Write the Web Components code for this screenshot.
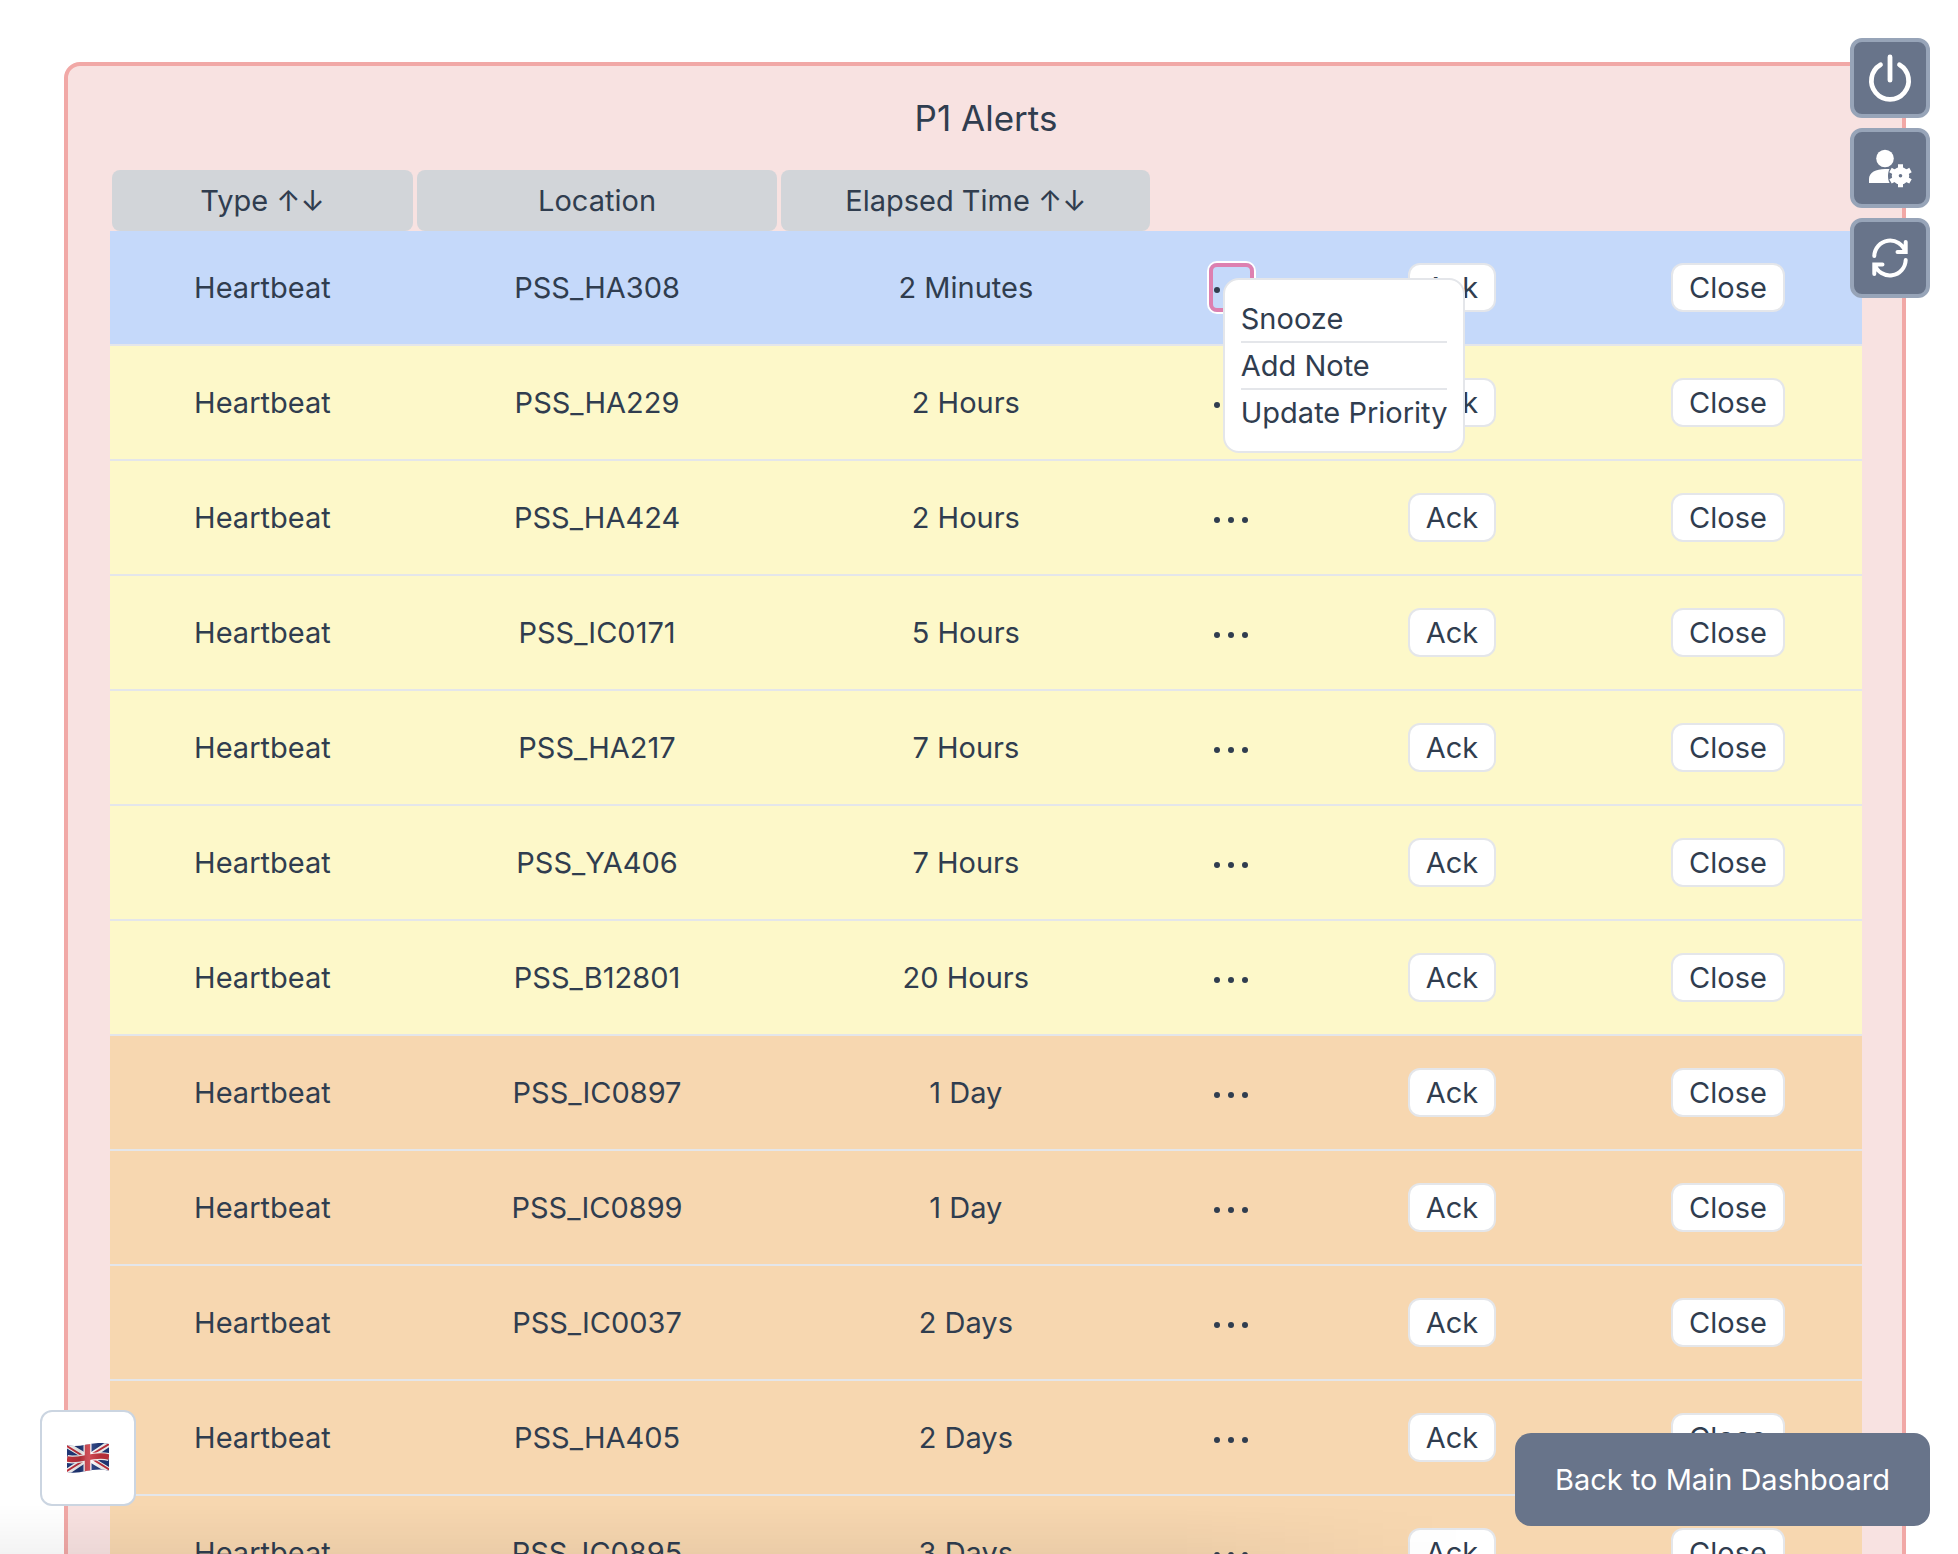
<!DOCTYPE html>
<html lang="en">
<head>
<meta charset="utf-8">
<meta name="viewport" content="width=device-width, initial-scale=1">
<title>P1 Alerts</title>
<style>
  html, body { margin: 0; background: #fff; }
  body {
    font-family: Inter, "Noto Sans", sans-serif;
    font-size: 29px;
    line-height: 45px;
    color: #303d4f;
    --line: #e4e6ea;
    --slate: #68748a;
  }
</style>
</head>
<body>
<alerts-app></alerts-app>

<script>
const define = (name, html, setup) => {
  const template = document.createElement('template');
  template.innerHTML = html;
  customElements.define(name, class extends HTMLElement {
    constructor() {
      super();
      this.attachShadow({ mode: 'open' }).append(template.content.cloneNode(true));
    }
    connectedCallback() {
      if (setup) setup.call(this, this.shadowRoot);
    }
  });
};

define('pill-button', `
  <style>
    :host { display: inline-block; }
    button {
      display: block; font: inherit; color: inherit; background: #fff;
      border: 2px solid var(--line); border-radius: 12px; padding: 0 16px;
      cursor: pointer;
    }
  </style>
  <button type="button"><slot></slot></button>`);

define('more-button', `
  <style>
    :host { display: inline-block; position: relative; vertical-align: top; }
    button {
      display: flex; align-items: center; justify-content: center;
      width: 45px; height: 49px; padding: 4px 0 0; box-sizing: border-box;
      background: none; border: 0; border-radius: 8px; cursor: pointer;
    }
    :host([open]) button { border: 4px solid #dd80b0; box-shadow: 0 0 0 2px #fff; }
    svg { flex: none; display: block; }
    ::slotted(*) { position: absolute; left: 14px; top: 15px; z-index: 2; }
  </style>
  <button type="button" aria-label="More actions">
    <svg width="34" height="6" viewBox="0 0 34 6" fill="#303d4f"><circle cx="3" cy="3" r="3"/><circle cx="17" cy="3" r="3"/><circle cx="31" cy="3" r="3"/></svg>
  </button>
  <slot></slot>`);

define('action-menu', `
  <style>
    :host { display: block; background: #fff; border: 2px solid var(--line); border-radius: 16px; padding: 16px; }
    ul { list-style: none; margin: 0; padding: 0; }
    li + li { border-top: 2px solid var(--line); }
    button {
      display: block; width: 100%; font: inherit; color: inherit; text-align: left;
      background: none; border: 0; padding: 0; white-space: nowrap; cursor: pointer;
    }
  </style>
  <ul>
    <li><button type="button">Snooze</button></li>
    <li><button type="button">Add Note</button></li>
    <li><button type="button">Update Priority</button></li>
  </ul>`);

define('alert-panel', `
  <style>
    :host {
      display: block; background: #f8e2e1; border: 4px solid #f1a8a6;
      border-radius: 16px; padding: 30px 40px 40px 42px;
    }
    h1 { margin: 0 0 29px; font-size: 35px; line-height: 45px; font-weight: 400; text-align: center; }
  </style>
  <h1><slot name="heading"></slot></h1>
  <slot></slot>`);

const ALERTS = [
  ['PSS_HA308', '2 Minutes', 'new'],
  ['PSS_HA229', '2 Hours', 'warm'],
  ['PSS_HA424', '2 Hours', 'warm'],
  ['PSS_IC0171', '5 Hours', 'warm'],
  ['PSS_HA217', '7 Hours', 'warm'],
  ['PSS_YA406', '7 Hours', 'warm'],
  ['PSS_B12801', '20 Hours', 'warm'],
  ['PSS_IC0897', '1 Day', 'late'],
  ['PSS_IC0899', '1 Day', 'late'],
  ['PSS_IC0037', '2 Days', 'late'],
  ['PSS_HA405', '2 Days', 'late'],
  ['PSS_IC0895', '3 Days', 'late']
];

define('alert-table', `
  <style>
    :host { display: block; }
    table { width: 100%; table-layout: fixed; border-collapse: separate; border-spacing: 0; text-align: center; }
    .c1 { width: 17.4%; } .c2 { width: 20.8%; } .c3 { width: 21.3%; }
    .c4 { width: 9%; } .c5 { width: 16.2%; }
    th { font-weight: 400; padding: 0 2px; }
    .head {
      display: block; box-sizing: border-box; width: 100%; height: 61px; padding: 0; margin: 0; border: 0;
      font: inherit; line-height: 62px; color: inherit; background: #d2d5d9; border-radius: 8px;
    }
    button.head { cursor: pointer; }
    tbody td { height: 113px; padding: 0; border-bottom: 2px solid var(--line); vertical-align: middle; }
    pill-button { vertical-align: top; }
    .new { background: #c5d9fa; }
    .warm { background: #fdf8c9; }
    .late { background: #f7d7b0; }
  </style>
  <table>
    <colgroup><col class="c1"><col class="c2"><col class="c3"><col class="c4"><col class="c5"><col></colgroup>
    <thead><tr>
      <th scope="col"><button type="button" class="head">Type ↑↓</button></th>
      <th scope="col"><span class="head">Location</span></th>
      <th scope="col"><button type="button" class="head">Elapsed Time ↑↓</button></th>
      <td></td><td></td><td></td>
    </tr></thead>
    <tbody></tbody>
  </table>`, function (root) {
  root.querySelector('tbody').innerHTML = ALERTS.map(([place, age, level], i) => `
    <tr class="${level}">
      <td>Heartbeat</td><td>${place}</td><td>${age}</td>
      <td>${i ? '<more-button></more-button>' : '<more-button open><action-menu></action-menu></more-button>'}</td>
      <td><pill-button>Ack</pill-button></td>
      <td><pill-button>Close</pill-button></td>
    </tr>`).join('');
});

define('tool-button', `
  <style>
    :host { display: block; }
    button {
      display: flex; align-items: center; justify-content: center;
      width: 80px; height: 80px; padding: 0; color: #fff; background: var(--slate);
      border: 4px solid #97a4b8; border-radius: 12px; cursor: pointer;
    }
  </style>
  <button type="button"><slot></slot></button>`, function (root) {
  root.querySelector('button').setAttribute('aria-label', this.getAttribute('label'));
});

define('language-button', `
  <style>
    button {
      display: flex; align-items: center; justify-content: center; box-sizing: border-box;
      width: 96px; height: 96px; padding: 0; background: #fff;
      border: 2px solid #cbd5e1; border-radius: 12px; cursor: pointer;
    }
  </style>
  <button type="button" aria-label="English (UK)">
    <svg width="42" height="30" viewBox="0 0 42 30">
      <defs>
        <clipPath id="wave"><path d="M0 2C13 6 26-3 42 1V28C27 23 14 32 0 29Z"/></clipPath>
        <linearGradient id="fold"><stop offset="0" stop-color="#000" stop-opacity=".05"/><stop offset=".3" stop-color="#000" stop-opacity=".16"/><stop offset=".55" stop-color="#fff" stop-opacity=".1"/><stop offset=".8" stop-color="#000" stop-opacity=".1"/><stop offset="1" stop-color="#000" stop-opacity=".1"/></linearGradient>
      </defs>
      <g clip-path="url(#wave)">
        <path fill="#21397c" d="M0 0H42V30H0Z"/>
        <path stroke="#fff" stroke-width="6" d="M-1 1.500L43 28M-1 29.500L43 0"/>
        <path stroke="#c8313e" stroke-width="2" d="M-1 2.500L20 15.500M22 14L43 27M-1 28.500L20 15.500M22 13L43 .5"/>
        <path fill="none" stroke="#fff" stroke-width="8" d="M0 16C13 19 26 10 42 14"/>
        <path stroke="#fff" stroke-width="8" d="M20.500 0V30"/>
        <path fill="none" stroke="#c7343f" stroke-width="5.500" d="M0 16C13 19 26 10 42 14"/>
        <path stroke="#cc3d48" stroke-width="5.500" d="M20.500 0V30"/>
        <path fill="url(#fold)" d="M0 0H42V30H0Z"/>
      </g>
    </svg>
  </button>`);

define('back-link', `
  <style>
    a {
      display: block; padding: 24px 40px; color: #fff; background: var(--slate);
      border-radius: 16px; text-decoration: none; white-space: nowrap;
    }
  </style>
  <a href="#dashboard"><slot></slot></a>`);

define('alerts-app', `
  <style>
    :host { display: block; position: relative; height: 100vh; overflow: hidden; }
    main { padding: 62px 52px 0 64px; }
    .shade { position: absolute; inset: auto 0 0 0; height: 50px; background: linear-gradient(to right, #0000000c 60%, #0000 75%); mask-image: linear-gradient(#0000, #000); pointer-events: none; }
    .tools { position: absolute; top: 38px; right: 28px; display: flex; flex-direction: column; gap: 10px; z-index: 3; }
    language-button { position: absolute; left: 40px; bottom: 48px; z-index: 3; }
    back-link { position: absolute; right: 28px; bottom: 28px; z-index: 3; }
    svg { display: block; }
  </style>
  <main>
    <alert-panel>
      <span slot="heading">P1 Alerts</span>
      <alert-table></alert-table>
    </alert-panel>
  </main>
  <div class="shade"></div>
  <nav class="tools" aria-label="Tools">
    <tool-button label="Sign out">
      <svg width="48" height="48" viewBox="0 0 48 48" fill="none" stroke="currentColor" stroke-width="4.800" stroke-linecap="round"><path d="M24 3V26.200M14.500 10.800A18.600 18.600 0 1 0 33.500 10.800"/></svg>
    </tool-button>
    <tool-button label="User settings">
      <svg width="48" height="48" viewBox="0 0 48 48" fill="currentColor">
        <circle cx="19" cy="14.500" r="8.800"/>
        <path d="M23.500 25C22.300 27.500 22 30 22 32C22 34.500 22.500 37 23.600 39H3V35C3 28.500 10 25 19 25Z"/>
        <circle cx="34.500" cy="31.700" r="5.500" fill="none" stroke="currentColor" stroke-width="6.500"/>
        <path d="M34.500 24V22.700M34.500 39.400V40.700M41.200 27.800L42.300 27.200M27.800 27.800L26.700 27.200M41.200 35.600L42.300 36.200M27.800 35.600L26.700 36.200" stroke="currentColor" stroke-width="5" stroke-linecap="square" stroke-linejoin="round"/>
        <circle cx="34.500" cy="31.700" r="3.500"/><circle cx="34.500" cy="31.700" r="1.800" fill="#68748a"/>
      </svg>
    </tool-button>
    <tool-button label="Refresh">
      <svg width="48" height="48" viewBox="0 0 48 48" fill="none" stroke="currentColor" stroke-width="4" stroke-linecap="round" stroke-linejoin="miter"><path d="M8.300 22A15.900 15.900 0 0 1 39.300 17.500M39.700 8V18H31.500M39.700 26A15.900 15.900 0 0 1 8.700 30.500M8.300 40V30.500H16.500"/></svg>
    </tool-button>
  </nav>
  <language-button></language-button>
  <back-link>Back to Main Dashboard</back-link>`);
</script>
</body>
</html>
